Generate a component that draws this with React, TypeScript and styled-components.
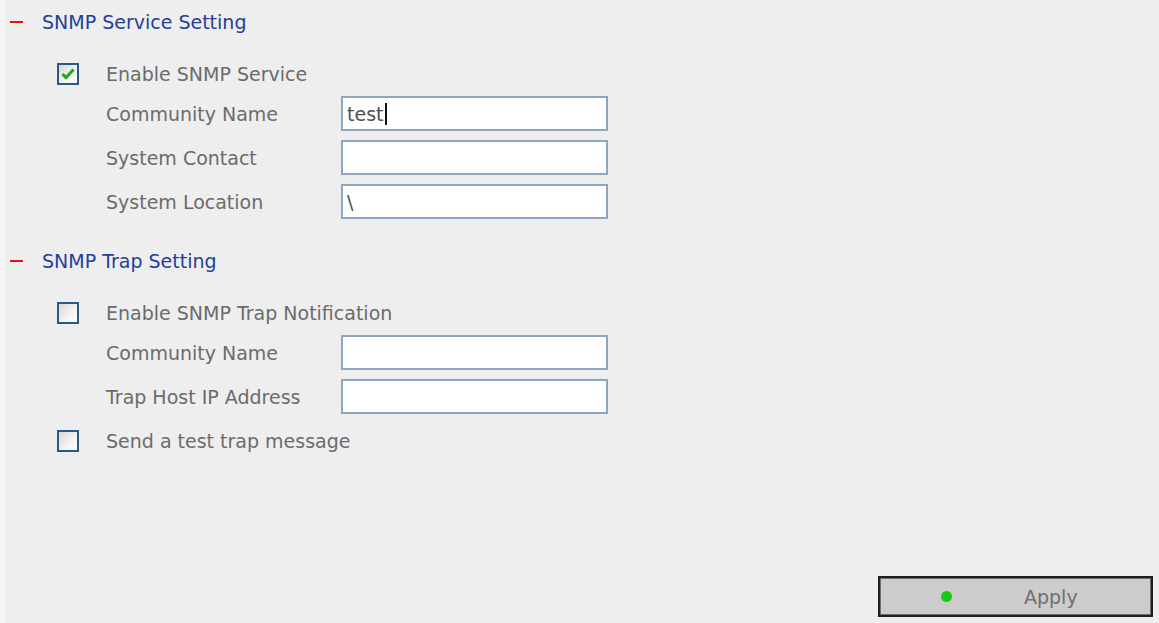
import React from 'react';
import styled, { createGlobalStyle } from 'styled-components';

const GlobalStyle = createGlobalStyle`
    html, body {
        margin: 0;
        padding: 0;
        background: #eeeeee;
    }
    body {
        font-family: 'DejaVu Sans', Tahoma, sans-serif;
    }
`;

const Page = styled.div`
    display: flex;
    flex-direction: column;
    width: 1159px;
    height: 623px;
    box-sizing: border-box;
    background: #eeeeee;
    border-left: 5px solid #f6f6f6;
    font-size: 19px;
    overflow: hidden;
`;

const Section = styled.section<{ $gap?: number }>`
    display: flex;
    flex-direction: column;
    margin-top: ${p => p.$gap || 0}px;
`;

const Heading = styled.div`
    display: flex;
    align-items: center;
    height: 44px;
    color: #23409a;
`;

const Minus = styled.span`
    display: block;
    width: 13px;
    height: 2px;
    margin-left: 5px;
    margin-right: 19px;
    background: #e3101c;
`;

const Body = styled.div`
    display: flex;
    flex-direction: column;
    padding-left: 52px;
    padding-top: 8px;
`;

const CheckRow = styled.label<{ $top?: number }>`
    display: flex;
    align-items: center;
    height: 44px;
    margin-top: ${p => p.$top || 0}px;
    color: #6b6b6b;
`;

const Box = styled.span`
    display: flex;
    align-items: center;
    justify-content: center;
    width: 22px;
    height: 22px;
    box-sizing: border-box;
    margin-right: 27px;
    border: 2px solid #2c5884;
    background: linear-gradient(135deg, #d9d9d3 0%, #f4f4f0 60%, #ffffff 100%);
`;

const FieldRow = styled.div`
    display: flex;
    align-items: center;
    height: 35px;
    margin-bottom: 9px;
    padding-left: 49px;
    color: #6b6b6b;
`;

const FieldLabel = styled.span`
    width: 235px;
    white-space: nowrap;
`;

const Field = styled.div`
    display: flex;
    align-items: center;
    width: 267px;
    height: 35px;
    box-sizing: border-box;
    padding-left: 4px;
    border: 2px solid #8ea6c3;
    background: #ffffff;
    color: #505050;
`;

const Caret = styled.span`
    display: block;
    width: 2px;
    height: 22px;
    margin-left: 1px;
    background: #111;
`;

const Footer = styled.div`
    display: flex;
    justify-content: flex-end;
    margin-top: auto;
    padding: 0 6px 6px 0;
`;

const ApplyButton = styled.button`
    display: flex;
    align-items: center;
    width: 275px;
    height: 41px;
    box-sizing: border-box;
    padding: 0;
    border: 2px solid #1e1e1e;
    box-shadow: inset 0 0 0 1px #6d6d6d;
    background: #cccccc;
    color: #6f6f6f;
    font-family: inherit;
    font-size: 19px;
`;

const Dot = styled.span`
    display: block;
    width: 11px;
    height: 11px;
    border-radius: 50%;
    margin-left: 61px;
    margin-right: 72px;
    background: #14cc14;
`;

function Check({ checked }: { checked?: boolean }) {
    return (
        <Box>
            {checked && (
                <svg width="14" height="12" viewBox="0 0 14 12">
                    <path d="M1.5 6 L5 9.5 L12.5 1.5" fill="none" stroke="#22a322" strokeWidth="3" />
                </svg>
            )}
        </Box>
    );
}

function App() {
    return (
        <Page>
            <GlobalStyle />
            <Section>
                <Heading><Minus />SNMP Service Setting</Heading>
                <Body>
                    <CheckRow><Check checked />Enable SNMP Service</CheckRow>
                    <FieldRow>
                        <FieldLabel>Community Name</FieldLabel>
                        <Field>test<Caret /></Field>
                    </FieldRow>
                    <FieldRow>
                        <FieldLabel>System Contact</FieldLabel>
                        <Field />
                    </FieldRow>
                    <FieldRow>
                        <FieldLabel>System Location</FieldLabel>
                        <Field>\</Field>
                    </FieldRow>
                </Body>
            </Section>

            <Section $gap={11}>
                <Heading><Minus />SNMP Trap Setting</Heading>
                <Body>
                    <CheckRow><Check />Enable SNMP Trap Notification</CheckRow>
                    <FieldRow>
                        <FieldLabel>Community Name</FieldLabel>
                        <Field />
                    </FieldRow>
                    <FieldRow>
                        <FieldLabel>Trap Host IP Address</FieldLabel>
                        <Field />
                    </FieldRow>
                    <CheckRow $top={-4}><Check />Send a test trap message</CheckRow>
                </Body>
            </Section>

            <Footer>
                <ApplyButton><Dot />Apply</ApplyButton>
            </Footer>
        </Page>
    );
}

export default App;
